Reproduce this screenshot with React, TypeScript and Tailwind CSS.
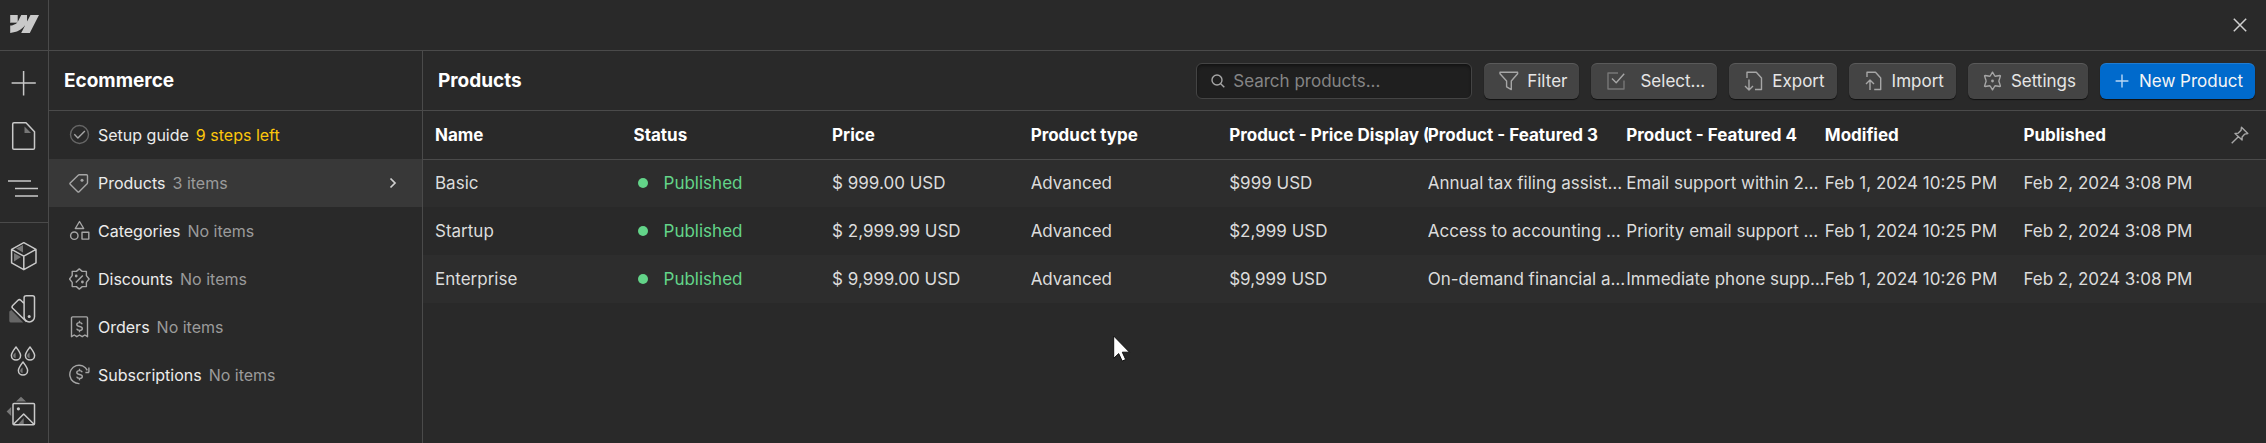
import type { ReactNode } from 'react';

interface Product {
  name: string;
  status: string;
  price: string;
  type: string;
  display: string;
  featured3: string;
  featured4: string;
  modified: string;
  published: string;
}

const PRODUCTS: Product[] = [
  {
    name: 'Basic', status: 'Published', price: '$ 999.00 USD', type: 'Advanced', display: '$999 USD',
    featured3: 'Annual tax filing assistance', featured4: 'Email support within 24 hours',
    modified: 'Feb 1, 2024 10:25 PM', published: 'Feb 2, 2024 3:08 PM',
  },
  {
    name: 'Startup', status: 'Published', price: '$ 2,999.99 USD', type: 'Advanced', display: '$2,999 USD',
    featured3: 'Access to accounting software', featured4: 'Priority email support within 12 hours',
    modified: 'Feb 1, 2024 10:25 PM', published: 'Feb 2, 2024 3:08 PM',
  },
  {
    name: 'Enterprise', status: 'Published', price: '$ 9,999.00 USD', type: 'Advanced', display: '$9,999 USD',
    featured3: 'On-demand financial advice', featured4: 'Immediate phone support',
    modified: 'Feb 1, 2024 10:26 PM', published: 'Feb 2, 2024 3:08 PM',
  },
];

const COLUMNS = [
  'Name', 'Status', 'Price', 'Product type', 'Product - Price Display (Monthly)',
  'Product - Featured 3', 'Product - Featured 4', 'Modified', 'Published',
];

const DOLLAR = 'M13.2 8.2c-.3-1-1.3-1.6-2.7-1.6-1.6 0-2.7.7-2.7 1.9 0 2.8 5.5 1.2 5.5 4 0 1.2-1.1 1.9-2.8 1.9-1.5 0-2.6-.7-2.8-1.7M10.5 4.8v1.8M10.5 14.4v1.8';

/* Left rail */

function RailButton({ label, children }: { label: string; children: ReactNode }) {
  return (
    <button aria-label={label} className="grid h-[53px] w-full place-items-center text-[#c9c9c9] hover:text-white">
      <svg width="36" height="37" viewBox="0 0 36 37" fill="none" stroke="currentColor" strokeWidth="1.5" strokeLinejoin="round">
        {children}
      </svg>
    </button>
  );
}

function Drop({ x, y }: { x: number; y: number }) {
  return (
    <g transform={`translate(${x} ${y})`}>
      <path d="M0 0c-2.5 3.4-4.6 5.9-4.6 8.4a4.6 4.6 0 0 0 9.2 0c0-2.5-2.1-5-4.6-8.4z" />
      <path d="M-.4 5.5v5.7c-1.4-.1-2.4-1.2-2.4-2.6 0-1 1.2-2 2.4-3.1z" fill="#777" stroke="none" />
    </g>
  );
}

function Rail() {
  return (
    <nav className="flex w-[49px] shrink-0 flex-col border-r border-[#4a4a4a]">
      <a href="#" aria-label="Dashboard" className="grid h-[51px] shrink-0 place-items-center border-b border-[#4a4a4a]">
        <svg width="30" height="30" viewBox="-1 0.4 25 25" fill="#c9c9c9">
          <path d="m24 4.515-7.658 14.97H9.149l3.205-6.204h-.144C9.566 16.713 5.621 18.973 0 19.485v-6.118s3.596-.213 5.71-2.435H0V4.515h6.417v5.278l.144-.001 2.622-5.277h4.854v5.244h.144l2.72-5.244H24Z" />
          <path d="M5.9 4.515h.6v5.3l-.8 1.12H0v-.5h5.9z" fill="#8f8f8f" />
        </svg>
      </a>
      <div className="border-b border-[#4a4a4a] pt-[5px] pb-[7px]">
        <RailButton label="Add elements">
          <path d="M5.6 19h24.2M17.6 7v24.4" />
        </RailButton>
        <RailButton label="Pages">
          <path d="M8 5.7h12l8.5 9V31a1.3 1.3 0 0 1-1.3 1.3H8A1.3 1.3 0 0 1 6.7 31V7A1.3 1.3 0 0 1 8 5.7z" />
          <path d="M18.5 9.5l6.5 6.5h-6.5z" fill="#777" stroke="none" />
        </RailButton>
        <RailButton label="Navigator">
          <path d="M2 11h23M9 18.5h23M9 26h23" />
        </RailButton>
      </div>
      <div className="pt-1.5">
        <RailButton label="Components">
          <path d="M17 8v7.5l-7-4zM8 16l7 4-7 4.5z" fill="#777" stroke="none" />
          <path d="M17.8 5.7l12.2 6.7v13.4l-12.2 6.9-12.2-6.9V12.4zM5.6 12.4l12.2 6.7 12.2-6.7M17.8 19.1v13.6" />
        </RailButton>
        <RailButton label="Style guide">
          <path d="M3.3 31V21.5l2-1.5 12 12.6H5a1.7 1.7 0 0 1-1.7-1.6z" fill="#666" stroke="none" />
          <path d="M20 5.7h6.5a2 2 0 0 1 2 2v19a5.2 5.2 0 0 1-10.4 0v-19a2 2 0 0 1 2-2zM18.1 13.5l-3.3-3.2a2 2 0 0 0-2.8 0l-5.3 5.2a2 2 0 0 0 0 2.8l13.8 13.4" />
          <circle cx="23.2" cy="26.5" r="1.5" fill="currentColor" stroke="none" />
        </RailButton>
        <RailButton label="Variables">
          <Drop x={10} y={4} />
          <Drop x={24} y={4} />
          <Drop x={17} y={19} />
        </RailButton>
        <RailButton label="Assets">
          <path d="M15 .8l5 4.7H10zM.6 15.5L5.2 11v9zM12 28.5l5.7-6.5v6.5z" fill="#777" stroke="none" />
          <rect x="7" y="7.5" width="21.5" height="21.2" rx="1" />
          <path d="M7.5 28.2L17.7 18l10.3 10.2" />
          <circle cx="12.4" cy="12.8" r="1.6" fill="currentColor" stroke="none" />
        </RailButton>
      </div>
    </nav>
  );
}

/* Ecommerce sidebar */

interface SideItem {
  label: string;
  note: string;
  icon: ReactNode;
  active?: boolean;
  highlight?: boolean;
}

const SIDE_ITEMS: SideItem[] = [
  {
    label: 'Setup guide', note: '9 steps left', highlight: true,
    icon: (
      <>
        <circle cx="10.5" cy="10.5" r="9" stroke="#666" />
        <path d="M5.3 10.3l3.6 3.6 7-7" />
      </>
    ),
  },
  {
    label: 'Products', note: '3 items', active: true,
    icon: (
      <>
        <path d="M1.2 10.9l8-7.7c.3-.3.6-.4 1-.4h7.3c.6 0 1 .4 1 1v7c0 .4-.1.7-.4 1l-8 7.9c-.4.4-1 .4-1.4 0l-7.5-7.4c-.4-.4-.4-1 0-1.4z" />
        <circle cx="13" cy="8.3" r="1.5" fill="currentColor" stroke="none" />
      </>
    ),
  },
  {
    label: 'Categories', note: 'No items',
    icon: <path d="M10.5 1.5l4.2 7H6.3zM13 12.3h6.8v6.8H13zM9 15.7a3.7 3.7 0 1 1-7.4 0 3.7 3.7 0 0 1 7.4 0z" />,
  },
  {
    label: 'Discounts', note: 'No items',
    icon: (
      <>
        <path d="M10.3.9l2.9 2.5h4.2v4.2l2.7 3.4-2.7 3.4v4.2h-4.2l-2.9 2.5-2.9-2.5H3.2v-4.2L.5 11l2.7-3.4V3.4h4.2z" />
        <path d="M6.8 14.5l7-7" />
        <circle cx="7.2" cy="8" r="1.4" fill="currentColor" stroke="none" />
        <circle cx="13.4" cy="14" r="1.4" fill="currentColor" stroke="none" />
      </>
    ),
  },
  {
    label: 'Orders', note: 'No items',
    icon: (
      <>
        <path d="M3.5.9h14a1 1 0 0 1 1 1V20.7l-2.6-1.7-2.7 1.7-2.7-1.7-2.7 1.7L5.2 19l-2.7 1.7V1.9a1 1 0 0 1 1-1z" />
        <path d={DOLLAR} />
      </>
    ),
  },
  {
    label: 'Subscriptions', note: 'No items',
    icon: (
      <>
        <path d="M10.5 19.6A9.2 9.2 0 1 1 18.3 6.4M19.9 3.5v5M19.9 8.5h-3.5" />
        <path d={DOLLAR} />
      </>
    ),
  },
];

function Sidebar() {
  return (
    <aside className="w-[374px] shrink-0 border-r border-[#4a4a4a]">
      <h2 className="flex h-[60px] items-center border-b border-[#4a4a4a] pl-[15px] text-[19px] font-bold text-white">
        Ecommerce
      </h2>
      <ul className="text-base">
        {SIDE_ITEMS.map((item) => (
          <li key={item.label}>
            <a
              href="#"
              className={`flex h-12 items-center gap-[7px] pr-6 pl-5 text-[#ececec] ${item.active ? 'bg-[#383838]' : ''}`}
            >
              <svg width="22" height="22" viewBox="0 0 22 22" fill="none" stroke="currentColor" strokeWidth="1.4" strokeLinejoin="round" className="shrink-0 text-[#a6a6a6]">
                {item.icon}
              </svg>
              <span>{item.label}</span>
              <span className={item.highlight ? 'text-[#fdc70c]' : 'text-[#9b9b9b]'}>{item.note}</span>
              {item.active && (
                <svg width="10" height="12" viewBox="0 0 10 12" fill="none" stroke="#d0d0d0" strokeWidth="1.7" className="ml-auto">
                  <path d="M2.5 1.5L7 6l-4.5 4.5" />
                </svg>
              )}
            </a>
          </li>
        ))}
      </ul>
    </aside>
  );
}

/* Toolbar */

function ToolButton({ label, icon, width = 20 }: { label: string; icon: ReactNode; width?: number }) {
  return (
    <button className="flex h-9 items-center gap-2 rounded-md bg-[#444] pr-3 pl-[15px] text-[#e6e6e6] shadow-[0_1px_1px_rgba(0,0,0,0.6),inset_0_1px_0_rgba(255,255,255,0.12)] hover:bg-[#4c4c4c]">
      <svg width={width} height="20" viewBox={`0 0 ${width} 20`} fill="none" stroke="#a6a6a6" strokeWidth="1.4" strokeLinejoin="round">
        {icon}
      </svg>
      {label}
    </button>
  );
}

function Toolbar() {
  return (
    <header className="flex h-[60px] items-center gap-3 border-b border-[#4a4a4a] pr-[11px] pl-[15px]">
      <h1 className="mr-auto text-[19px] font-bold text-white">Products</h1>
      <label className="flex h-9 w-[276px] items-center gap-2 rounded-md border border-[#444] bg-[#1f1f1f] px-3.5 shadow-[inset_0_2px_3px_rgba(0,0,0,0.4)]">
        <svg width="14" height="14" viewBox="0 0 14 14" fill="none" stroke="#a6a6a6" strokeWidth="1.4">
          <circle cx="6" cy="6" r="5" />
          <path d="M9.7 9.7l3.6 3.6" />
        </svg>
        <input
          type="text"
          aria-label="Search products"
          placeholder="Search products..."
          className="min-w-0 flex-1 bg-transparent text-[#e6e6e6] outline-none placeholder:text-[#858585]"
        />
      </label>
      <ToolButton label="Filter" icon={<path d="M1 1.2h17.6v1.6l-6.3 7.2v8.6L7.6 15.8V10L1 2.8z" />} />
      <ToolButton
        label="Select..."
        width={26}
        icon={
          <>
            <path d="M12 2H2v16h16V9.5" stroke="#777" />
            <path d="M6 7.5l4.2 4.3 8-9" />
          </>
        }
      />
      <ToolButton label="Export" icon={<path d="M3 7V1.2h9.3l5.2 5.8v11.5H11M5 8.5v10.5M1 15l4 4 4-4" />} />
      <ToolButton label="Import" icon={<path d="M3 6V1.2h8.5l5.2 5.8v11.5h-6.5M6 19V9M2 13l4-4 4 4" />} />
      <ToolButton
        label="Settings"
        icon={
          <>
            <path d="M9.5 1.2l2.3 3.8c.1.2.3.3.5.2l4.6-.7c.4 0 .6.3.5.6l-1.500 4.600c-.1.2-.1.4 0 .6l1.500 4.600c.1.3-.1.6-.5.6l-4.600-.7c-.2 0-.4.1-.5.2l-2.300 3.800-2.300-3.800c-.1-.2-.3-.2-.5-.2l-4.600.7c-.4 0-.6-.3-.5-.6l1.500-4.600c.1-.2.1-.4 0-.6L1.600 5.100c-.1-.3.1-.6.5-.6l4.600.7c.2 0 .4-.1.5-.2z" />
            <circle cx="9.5" cy="10" r="1.4" fill="#a6a6a6" stroke="none" />
          </>
        }
      />
      <button className="flex h-9 items-center gap-2.5 rounded-md bg-[#006acc] pr-3 pl-[15px] text-[#f5f5f5] shadow-[0_1px_1px_rgba(0,0,0,0.6),inset_0_1px_0_rgba(255,255,255,0.12)] hover:bg-[#187cd9]">
        <svg width="14" height="14" viewBox="0 0 14 14" fill="none" stroke="#b9d8f5" strokeWidth="1.4">
          <path d="M.6 7h12.8M7 .6v12.8" />
        </svg>
        New Product
      </button>
    </header>
  );
}

/* Product table */

// Content runs right up to where the next column's text begins.
function Cell({ children }: { children: ReactNode }) {
  return (
    <td className="h-12 pl-3">
      <div className="-mr-3 truncate">{children}</div>
    </td>
  );
}

function ProductTable() {
  return (
    <table className="w-full table-fixed border-collapse">
      <thead>
        <tr className="border-b border-[#4a4a4a] text-left text-white">
          {COLUMNS.map((col) => (
            <th key={col} scope="col" className="h-12 pl-3 font-bold">
              <div className="-mr-3 overflow-hidden whitespace-nowrap">{col}</div>
            </th>
          ))}
          <th scope="col" className="w-14">
            <button aria-label="Pin columns" className="grid w-full place-items-center pl-1">
              <svg width="18" height="18" viewBox="0 0 18 18" fill="none" stroke="#a6a6a6" strokeWidth="1.4" strokeLinejoin="round">
                <path d="M10.5 1.2l6.3 6.3-3 .6-2.7 2.8v3.2L4 7.5l3.3-.4 2.8-2.9zM7.3 10.7L.7 17.3" />
              </svg>
            </button>
          </th>
        </tr>
      </thead>
      <tbody className="text-[#dcdcdc]">
        {PRODUCTS.map((p) => (
          <tr key={p.name} className="odd:bg-[#2d2d2d]">
            <Cell>{p.name}</Cell>
            <Cell>
              <span className="flex items-center gap-4 pl-1 text-[#63d489]">
                <span className="size-2.5 rounded-full bg-[#63d489]" />
                {p.status}
              </span>
            </Cell>
            <Cell>{p.price}</Cell>
            <Cell>{p.type}</Cell>
            <Cell>{p.display}</Cell>
            <Cell>{p.featured3}</Cell>
            <Cell>{p.featured4}</Cell>
            <Cell>{p.modified}</Cell>
            <Cell>{p.published}</Cell>
            <td />
          </tr>
        ))}
      </tbody>
    </table>
  );
}

export default function App() {
  return (
    <div className="relative flex min-h-screen bg-[#292929] font-[Inter,'Liberation_Sans',sans-serif] text-[17px] leading-6">
      <Rail />
      <div className="flex min-w-0 flex-1 flex-col">
        <div className="flex h-[51px] shrink-0 items-center justify-end border-b border-[#4a4a4a] pr-[19px]">
          <button aria-label="Close">
            <svg width="14" height="14" viewBox="0 0 14 14" fill="none" stroke="#d0d0d0" strokeWidth="1.5">
              <path d="M.8.8l12.4 12.4M13.2.8L.8 13.2" />
            </svg>
          </button>
        </div>
        <div className="flex flex-1">
          <Sidebar />
          <main className="min-w-0 flex-1">
            <Toolbar />
            <ProductTable />
          </main>
        </div>
      </div>
      <svg width="18" height="27" viewBox="0 0 18 27" className="pointer-events-none absolute top-[335px] left-[1113px]">
        <path d="M.7 1v22.3l5-4.7 3.5 7.5 3.5-1.6-3.4-7.3h7.2z" fill="#fff" stroke="#111" strokeWidth="1" />
      </svg>
    </div>
  );
}
